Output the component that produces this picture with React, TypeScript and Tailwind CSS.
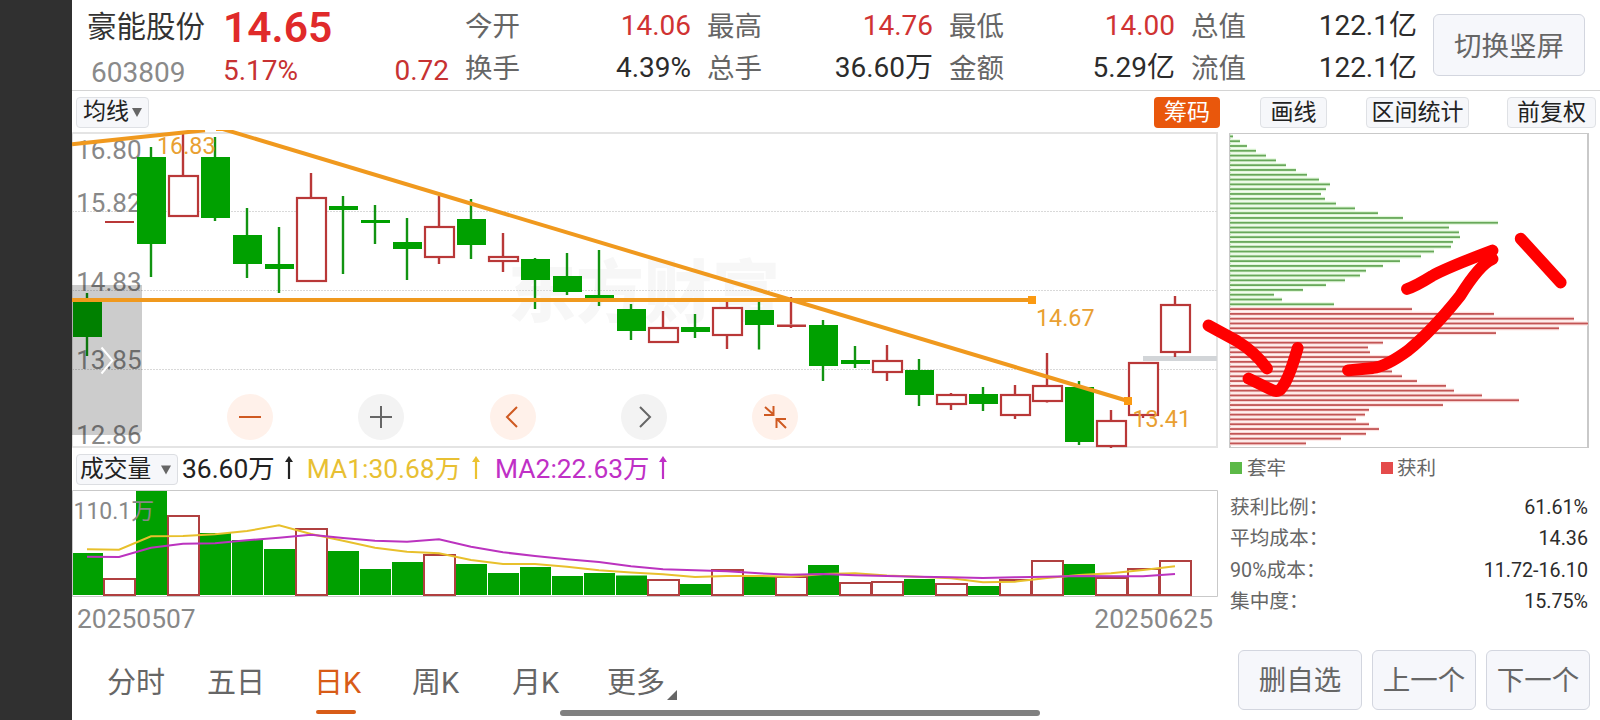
import React from 'react';

type Candle = { up?: boolean; top: number; bottom: number; high: number; low: number };

// Coordinates are in chart units, see the viewBox of each svg
const candles: Candle[] = [
  { top: 302, bottom: 337, high: 293, low: 356 },
  { up: true, top: 221, bottom: 223, high: 221, low: 223 },
  { top: 157, bottom: 244, high: 147, low: 277 },
  { up: true, top: 175, bottom: 217, high: 133, low: 217 },
  { top: 157, bottom: 218, high: 137, low: 221 },
  { top: 235, bottom: 264, high: 208, low: 278 },
  { top: 264, bottom: 269, high: 227, low: 293 },
  { up: true, top: 197, bottom: 282, high: 173, low: 282 },
  { top: 206, bottom: 210, high: 196, low: 274 },
  { top: 220, bottom: 223, high: 205, low: 244 },
  { top: 242, bottom: 249, high: 218, low: 280 },
  { up: true, top: 226, bottom: 258, high: 196, low: 264 },
  { top: 219, bottom: 245, high: 199, low: 259 },
  { up: true, top: 256, bottom: 262, high: 233, low: 272 },
  { top: 259, bottom: 280, high: 258, low: 309 },
  { top: 276, bottom: 292, high: 253, low: 295 },
  { top: 295, bottom: 302, high: 250, low: 306 },
  { top: 309, bottom: 331, high: 304, low: 340 },
  { up: true, top: 327, bottom: 343, high: 311, low: 343 },
  { top: 327, bottom: 332, high: 314, low: 338 },
  { up: true, top: 307, bottom: 336, high: 302, low: 349 },
  { top: 310, bottom: 325, high: 302, low: 349.5 },
  { up: true, top: 324.5, bottom: 327, high: 297, low: 328 },
  { top: 325, bottom: 366, high: 320, low: 381 },
  { top: 360, bottom: 364, high: 346, low: 368 },
  { up: true, top: 360, bottom: 373, high: 345, low: 381 },
  { top: 370, bottom: 395, high: 359, low: 406 },
  { up: true, top: 394, bottom: 405, high: 393, low: 410 },
  { top: 394, bottom: 404, high: 387, low: 411 },
  { up: true, top: 394, bottom: 416, high: 385, low: 419 },
  { up: true, top: 385, bottom: 402, high: 353, low: 402.5 },
  { top: 387, bottom: 442, high: 381, low: 445 },
  { up: true, top: 420, bottom: 447, high: 410, low: 448 },
  { up: true, top: 362, bottom: 416, high: 362, low: 418 },
  { up: true, top: 304, bottom: 353, high: 296, low: 357 },
];

const volumeTops = [
  553, 578, 491, 515, 533, 540, 549, 528, 551, 569, 562, 554, 564, 573, 567, 576, 573, 575.5,
  579, 584, 569, 576, 576, 565, 582, 581, 579, 583, 586, 579, 560, 564, 577, 568, 560,
];

const risingVolume = [1, 3, 7, 11, 18, 20, 22, 24, 25, 27, 29, 30, 32, 33, 34];

const ma1 = [
  549.3, 549.7, 536.3, 536, 534.3, 531, 525.3, 534, 540.7, 547.7, 551.7, 553.3, 560, 564, 564,
  566.7, 570.3, 572.5, 574.3, 577, 576, 576, 576.7, 574, 573.3, 575.5, 576.7, 578.3, 582.3,
  581.7, 578, 575, 573.3, 570, 566.3,
];

const ma2 = [
  556.7, 557, 547.7, 543.7, 543.3, 540.3, 537.7, 534.7, 538, 540.7, 541.7, 539.3, 546.7, 552.3,
  556, 559.3, 562, 566.3, 569.3, 570.3, 571.3, 573.3, 574.7, 574, 575.3, 576, 576.7, 577.3, 578,
  577.3, 576.7, 576, 576.3, 576.3, 574,
];

const trapped = [
  3, 10, 17, 26, 36, 46, 56, 66, 77, 89, 100, 96, 91, 95, 106, 125, 148, 173, 268, 219, 229, 230,
  223, 221, 204, 191, 170, 153, 136, 130, 115, 96, 73, 44, 52, 104,
];

const profit = [
  182, 264, 344, 358, 329, 266, 200, 153, 138, 140, 162, 156, 150, 162, 172, 187, 216, 224, 252,
  289, 213, 139, 135, 126, 139, 149, 136, 111, 76,
];

const quotes = [
  [
    { label: '今开', value: '14.06', red: true },
    { label: '换手', value: '4.39%' },
  ],
  [
    { label: '最高', value: '14.76', red: true },
    { label: '总手', value: '36.60万' },
  ],
  [
    { label: '最低', value: '14.00', red: true },
    { label: '金额', value: '5.29亿' },
  ],
  [
    { label: '总值', value: '122.1亿' },
    { label: '流值', value: '122.1亿' },
  ],
];

const stats = [
  { label: '获利比例：', value: '61.61%' },
  { label: '平均成本：', value: '14.36' },
  { label: '90%成本：', value: '11.72-16.10' },
  { label: '集中度：', value: '15.75%' },
];

const axis = [
  { y: 158.5, text: '16.80' },
  { y: 212.3, text: '15.82' },
  { y: 291, text: '14.83' },
  { y: 368.7, text: '13.85' },
  { y: 443.7, text: '12.86' },
];

const cx = (i: number) => 87 + i * 32;
const toPoints = (ys: number[]) => ys.map((y, i) => `${cx(i)},${y}`).join(' ');

const Caret = ({ className }: { className: string }) => (
  <svg viewBox="0 0 10 9" className={className}>
    <path d="M0 0h10L5 9z" fill="#666" />
  </svg>
);

const UpArrow = ({ className }: { className: string }) => (
  <svg viewBox="0 0 8 23" className={`h-[23px] w-2 ${className}`}>
    <path d="M4 3v20" stroke="currentColor" strokeWidth="2.2" />
    <path d="M0 6l4-6 4 6z" fill="currentColor" />
  </svg>
);

const Header = () => (
  <header className="flex h-[91px] shrink-0 border-b border-[#d4d4d4]">
    <div className="w-[151px] pl-[15px]">
      <div className="pt-[5px] text-[29.5px] leading-[44px] text-[#333]">豪能股份</div>
      <div className="pt-2 pl-1 text-[28px] leading-8 text-[#8a8a8a]">603809</div>
    </div>
    <div className="w-[226px]">
      <div className="pt-[5px] text-[42.5px] leading-[46px] font-semibold text-[#e02a2a]">14.65</div>
      <div className="flex justify-between pt-1 text-[28px] leading-8 text-[#c73232]">
        <span>5.17%</span>
        <span>0.72</span>
      </div>
    </div>
    <div className="flex gap-4 pl-4">
      {quotes.map((column, i) => (
        <div key={i} className="w-[226px] pt-[5px] text-[28px] leading-[42px]">
          {column.map((q) => (
            <div key={q.label} className="flex justify-between">
              <span className="pt-0.5 text-[27.5px] leading-10 text-[#666]">{q.label}</span>
              <span className={q.red ? 'text-[#d03333]' : 'text-[#2c2c2c]'}>{q.value}</span>
            </div>
          ))}
        </div>
      ))}
    </div>
    <button className="mt-3.5 ml-4 h-[62px] w-[152px] rounded-md border border-[#d3d6df] bg-[#f6f7fb] pt-1 text-[27.5px] text-[#666]">
      切换竖屏
    </button>
  </header>
);

const toolButton = 'h-[31px] rounded border border-[#dfe1e5] bg-[#f6f7fa] text-[23px] leading-[28px] text-[#222]';

const Toolbar = () => (
  <div className="flex h-[39px] shrink-0 items-start pt-[6px] pl-1">
    <button className={`${toolButton} flex w-[73px] items-center gap-[3px] pl-[6px]`}>
      <span className="-mt-0.5">均线</span>
      <Caret className="h-[9px] w-2.5" />
    </button>
    <button className="ml-[1005px] h-[31px] w-[66px] rounded bg-[#e9570c] text-[23px] leading-[29px] text-white">
      筹码
    </button>
    <button className={`${toolButton} ml-10 w-[67px]`}>画线</button>
    <button className={`${toolButton} ml-[39px] w-[103px]`}>区间统计</button>
    <button className={`${toolButton} ml-[38px] w-[89px]`}>前复权</button>
  </div>
);

const controls = [
  { name: 'minus', warm: true, d: 'M12 23h22' },
  { name: 'plus', warm: false, d: 'M12 23h22M23 12v22' },
  { name: 'prev', warm: true, d: 'M27 13L17 23l10 10' },
  { name: 'next', warm: false, d: 'M19 13l10 10-10 10' },
  { name: 'shrink', warm: true, d: 'M13 13l8.500 7.500M12 21h10.500M21.500 12v9M34 34l-9-9M24.500 34V25M23.500 25H34' },
];

const PriceChart = () => (
  <div className="relative h-[318px] w-[1146px]">
    <svg viewBox="72 130 1146 318" className="block h-full w-full">
      <text x="508" y="317" fontSize="68" fontWeight="900" fill="#f7f7f7">
        东方财富
      </text>
      <path d="M72 133H1217V447H72" fill="none" stroke="#e4e4e4" strokeWidth="2" />
      <path d="M72.5 133V447" stroke="#dcdcdc" />
      {[211.5, 290.5, 369.5].map((y) => (
        <path key={y} d={`M72 ${y}H1217`} stroke="#d9d9d9" strokeDasharray="2 1" />
      ))}
      <g fontSize="26" fill="#888" textAnchor="end">
        {axis.map((a) => (
          <text key={a.text} x="141.5" y={a.y}>
            {a.text}
          </text>
        ))}
      </g>
      <rect x="1143" y="356" width="74" height="5" fill="#d2d5d8" />
      {candles.map((c, i) => {
        const x = cx(i);
        const color = c.up ? '#b93838' : '#00a000';
        const wick = c.up ? '#b93838' : '#119411';
        const flat = c.bottom - c.top < 3;
        return (
          <g key={i}>
            <path d={`M${x} ${c.high}V${c.top}M${x} ${c.bottom}V${c.low}`} stroke={wick} strokeWidth="2.4" />
            {c.up && !flat ? (
              <rect
                x={x - 14}
                y={c.top + 1}
                width="29"
                height={c.bottom - c.top - 2}
                fill="#fff"
                stroke={color}
                strokeWidth="2.2"
              />
            ) : (
              <rect x={x - 14} y={c.top} width="29" height={c.bottom - c.top} fill={color} />
            )}
          </g>
        );
      })}
      <path d="M72 285h70v146l-4 4H72z" fill="#000" fillOpacity="0.2" />
      <path d="M101.5 347.5L112.5 360.5 101.5 373.5" fill="none" stroke="#fff" strokeWidth="2" />
      <g fill="none" stroke="#f0991e" strokeWidth="4">
        <path d="M72 144.3L205 130.2" />
        <path d="M218 127.6L1128 401" />
        <path d="M72 300H1032" />
      </g>
      <g fill="#fb9a12">
        <rect x="216" y="123" width="8" height="8" />
        <rect x="1028" y="296" width="8" height="8" />
        <rect x="1124" y="397" width="8" height="8" />
      </g>
      <g fontSize="23.3" fill="#e9a032">
        <text x="157" y="153.7">16.83</text>
        <text x="1036" y="326">14.67</text>
        <text x="1132.5" y="427">13.41</text>
      </g>
    </svg>
    <div className="absolute top-[264px] left-[155px] flex gap-[85.25px]">
      {controls.map((c) => (
        <button
          key={c.name}
          className={c.warm ? 'rounded-full bg-[#fff1ea] text-[#cf5a22]' : 'rounded-full bg-[#f3f3f3] text-[#666]'}
        >
          <svg viewBox="0 0 46 46" className="block size-[46px]">
            <path d={c.d} fill="none" stroke="currentColor" strokeWidth="2" />
          </svg>
        </button>
      ))}
    </div>
  </div>
);

const VolumeLegend = () => (
  <div className="flex h-[42px] items-start pt-[6px] pl-1 text-[26.4px] leading-[32px] text-[#222]">
    <button className="flex h-[31px] w-[102px] items-center rounded border border-[#dcdee2] bg-[#f6f7fa] pl-[3px] text-[23.7px]">
      <span className="-mt-0.5">成交量</span>
      <Caret className="ml-[10px] h-[10px] w-[10px]" />
    </button>
    <span className="-mt-px ml-1">36.60万</span>
    <UpArrow className="mt-0.5 ml-2.5" />
    <span className="-mt-px ml-[14px] text-[#e8c033]">MA1:30.68万</span>
    <UpArrow className="mt-0.5 ml-[11px] text-[#ecc230]" />
    <span className="-mt-px ml-[15px] text-[#bf30c6]">MA2:22.63万</span>
    <UpArrow className="mt-0.5 ml-[10px] text-[#bf30c6]" />
  </div>
);

const VolumeChart = () => (
  <svg viewBox="72 490 1146 107" className="block h-[107px] w-[1146px]">
    <path d="M72.5 490.5H1217.5V596.5H72.5z" fill="none" stroke="#c9c9c9" />
    {volumeTops.map((top, i) =>
      risingVolume.includes(i) ? (
        <rect
          key={i}
          x={cx(i) - 15}
          y={top + 1}
          width="31"
          height={594 - top}
          fill="#fff"
          stroke="#b04040"
          strokeWidth="2"
        />
      ) : (
        <rect key={i} x={cx(i) - (i ? 15 : 14)} y={top} width={i ? 31 : 30} height={595 - top} fill="#00a000" />
      ),
    )}
    <text x="73.5" y="519" fontSize="23" fill="#888">
      110.1万
    </text>
    <polyline points={toPoints(ma1)} fill="none" stroke="#e8c02c" strokeWidth="2" />
    <polyline points={toPoints(ma2)} fill="none" stroke="#bb33bf" strokeWidth="2" />
  </svg>
);

const ChipsChart = () => (
  <svg viewBox="1229 133 360 315" className="block h-[315px] w-[360px]">
    <path d="M1230 133V448M1588 133V448" stroke="#c9c9c9" strokeWidth="2" />
    <path d="M1229 133.5H1589M1229 447.5H1589" stroke="#c9c9c9" />
    {[...trapped, ...profit].map((width, i) => {
      const y = 136.4 + i * 4.797;
      const green = i < trapped.length;
      return (
        <g key={i}>
          <rect x="1230" y={y - 2.1} width={width} height="4.2" fill={green ? '#e3f8dc' : '#fde2e0'} />
          <rect x="1230" y={y - 0.9} width={width} height="1.8" fill={green ? '#68a85a' : '#c25555'} />
        </g>
      );
    })}
  </svg>
);

const ChipsPanel = () => (
  <aside className="ml-[11px] w-[360px] pt-[3px]">
    <ChipsChart />
    <div className="flex h-10 items-center pl-px text-[19.5px] text-[#666]">
      <span className="size-3 bg-[#5cb947]" />
      <span className="w-[135px] pt-0.5 pl-[5px]">套牢</span>
      <span className="ml-1 size-3 bg-[#e44b4b]" />
      <span className="pt-0.5 pl-1">获利</span>
    </div>
    <dl className="mt-1 pl-px">
      {stats.map((s) => (
        <div key={s.label} className="flex h-[31.5px] items-center justify-between text-[19.7px]">
          <dt className="text-[#666]">{s.label}</dt>
          <dd className="pr-px text-[#2c2c2c]">{s.value}</dd>
        </div>
      ))}
    </dl>
  </aside>
);

const navButton =
  'h-[60px] rounded-md border border-[#d3d6df] bg-[#f6f7fb] pt-0.5 text-[27.5px] leading-[56px] text-[#666]';

const Footer = () => (
  <footer className="relative flex h-20 shrink-0 text-[29px] leading-[86px] text-[#666]">
    <span className="w-[100px] pl-[35px] whitespace-nowrap">分时</span>
    <span className="w-[107px] pl-[35px] whitespace-nowrap">五日</span>
    <span className="relative w-[98px] pl-[35px] text-[#d85c17]">
      日K
      <i className="absolute top-[70px] left-[37px] h-1 w-10 rounded-full bg-[#d85c17]" />
    </span>
    <span className="w-[100px] pl-[35px]">周K</span>
    <span className="w-[95px] pl-[35px]">月K</span>
    <span className="relative w-[180px] pl-[35px]">
      更多
      <svg viewBox="0 0 10 10" className="absolute top-[50px] left-[95px] size-2.5">
        <path d="M10 0v10H0z" fill="#666" />
      </svg>
    </span>
    <i className="absolute top-[70px] left-[488px] h-1.5 w-[480px] rounded-full bg-[#808080]" />
    <div className="mt-2.5 ml-auto flex gap-2.5 pr-2.5">
      <button className={`${navButton} w-[124px]`}>删自选</button>
      <button className={`${navButton} w-[104px]`}>上一个</button>
      <button className={`${navButton} w-[104px]`}>下一个</button>
    </div>
  </footer>
);

// Freehand marks drawn over the chart
const Marks = () => (
  <svg viewBox="0 0 1600 720" className="pointer-events-none absolute inset-0 h-[720px] w-[1600px]">
    <g fill="none" stroke="#ff0000" strokeWidth="11.8" strokeLinecap="round" strokeLinejoin="round">
      <path d="M1208.5 325.5L1237 341Q1255 352 1267 368.5" />
      <path d="M1248.5 378.5L1272 390Q1279 393.5 1283 386Q1289 378 1297.7 348" />
      <path d="M1348 370.3L1373 368Q1386 366.5 1408 350.5Q1432 331 1460 296Q1480 264 1492.5 259" />
      <path d="M1407 289Q1416 286 1432 276Q1446 268 1492.5 250.5" />
      <path d="M1520.7 238.7L1560.7 282.5" />
    </g>
  </svg>
);

export default function App() {
  return (
    <div className="relative flex h-[720px] w-[1600px] overflow-hidden bg-white font-['Roboto','Noto_Sans_CJK_SC',sans-serif]">
      <div className="w-[72px] shrink-0 bg-[#303030]" />
      <main className="flex w-[1528px] flex-col">
        <Header />
        <Toolbar />
        <div className="flex h-[510px]">
          <section className="w-[1146px]">
            <PriceChart />
            <VolumeLegend />
            <VolumeChart />
            <div className="flex justify-between px-[5px] text-[26.4px] leading-[45px] text-[#888]">
              <span>20250507</span>
              <span>20250625</span>
            </div>
          </section>
          <ChipsPanel />
        </div>
        <Footer />
      </main>
      <Marks />
    </div>
  );
}
